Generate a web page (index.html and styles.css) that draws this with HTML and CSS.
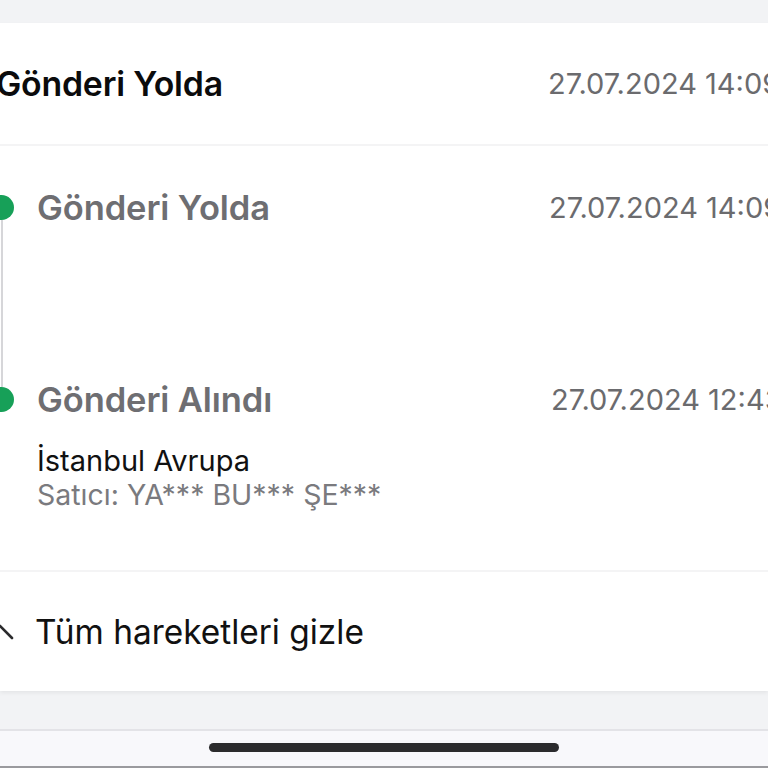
FILE: index.html
```html
<!DOCTYPE html>
<html lang="tr">
<head>
<meta charset="utf-8">
<link rel="stylesheet" href="styles.css">
</head>
<body>
<div class="screen">
  <div class="top-gap"></div>
  <section class="card">
    <div class="summary">
      <div class="summary-title">Gönderi Yolda</div>
      <div class="date">27.07.2024 14:09</div>
    </div>
    <div class="timeline">
      <div class="item item-first">
        <div class="rail">
          <span class="dot"></span>
          <span class="line"></span>
        </div>
        <div class="content">
          <div class="head">
            <div class="status">Gönderi Yolda</div>
            <div class="date">27.07.2024 14:09</div>
          </div>
        </div>
      </div>
      <div class="item item-last">
        <div class="rail">
          <span class="dot"></span>
        </div>
        <div class="content">
          <div class="head">
            <div class="status">Gönderi Alındı</div>
            <div class="date date-2">27.07.2024 12:43</div>
          </div>
          <div class="place">İstanbul Avrupa</div>
          <div class="seller">Satıcı: YA*** BU*** ŞE***</div>
        </div>
      </div>
    </div>
    <div class="toggle">
      <svg class="chev" width="28" height="20" viewBox="0 0 28 20"><path d="M2 16 L14 4 L26 16" fill="none" stroke="#2b2b2d" stroke-width="2.6" stroke-linecap="round" stroke-linejoin="round"/></svg>
      <span class="toggle-text">Tüm hareketleri gizle</span>
    </div>
  </section>
  <div class="gap"></div>
  <div class="home-area">
    <span class="home-bar"></span>
  </div>
</div>
</body>
</html>
```
FILE: styles.css
```css
html, body {
  margin: 0;
  padding: 0;
}
body {
  width: 768px;
  height: 768px;
  overflow: hidden;
  background: #f2f3f5;
  font-family: Inter, "Noto Sans", sans-serif;
}
.screen {
  width: 768px;
  height: 768px;
  display: flex;
  flex-direction: column;
  overflow: hidden;
}
.top-gap {
  height: 23px;
  flex: none;
}
.card {
  background: #fff;
  flex: none;
  box-shadow: 0 2px 4px rgba(0,0,0,0.06);
  position: relative;
  z-index: 1;
}
.summary {
  height: 121px;
  display: flex;
  align-items: center;
  border-bottom: 2px solid #f4f4f5;
  width: 900px;
}
.summary-title {
  width: 552px;
  margin-left: -4px;
  font-size: 33.8px;
  font-weight: 600;
  color: #0b0b0c;
  letter-spacing: -0.2px;
}
.date {
  font-size: 29px;
  color: #6b6b6e;
  white-space: nowrap;
  letter-spacing: 0;
}
.timeline {
  padding-top: 49px;
  width: 900px;
}
.item {
  display: flex;
  gap: 23px;
  margin-left: -11px;
}
.item-first {
  height: 192px;
}
.item-last {
  height: 183px;
  border-bottom: 2px solid #f4f4f5;
}
.rail {
  width: 25px;
  flex: none;
  display: flex;
  flex-direction: column;
  align-items: center;
}
.dot {
  width: 25px;
  height: 25px;
  border-radius: 50%;
  background: #17a058;
  flex: none;
}
.line {
  width: 2px;
  flex: 1;
  background: #d6d6d9;
  margin-left: 1px;
}
.content {
  flex: 1;
}
.head {
  display: flex;
  align-items: center;
  height: 25px;
}
.status {
  width: 512px;
  font-size: 34.5px;
  font-weight: 600;
  color: #6e6e72;
  letter-spacing: -0.1px;
}
.date-2 {
  margin-left: 2px;
}
.place {
  margin-top: 32px;
  font-size: 29px;
  color: #111;
  line-height: 34px;
}
.seller {
  font-size: 28.5px;
  color: #7a7a7e;
  line-height: 34px;
}
.toggle {
  height: 119px;
  display: flex;
  align-items: center;
}
.chev {
  margin-left: -14px;
  margin-right: 21px;
  flex: none;
}
.toggle-text {
  font-size: 33.4px;
  color: #111;
}
.gap {
  height: 38px;
  flex: none;
  border-bottom: 2px solid #e3e3e7;
}
.home-area {
  flex: 1;
  background: #f8f8fb;
  border-bottom: 2px solid #9a9a9e;
  display: flex;
  justify-content: center;
  padding-top: 12px;
}
.home-bar {
  width: 350px;
  height: 9px;
  border-radius: 5px;
  background: #2b2b2d;
}
```
